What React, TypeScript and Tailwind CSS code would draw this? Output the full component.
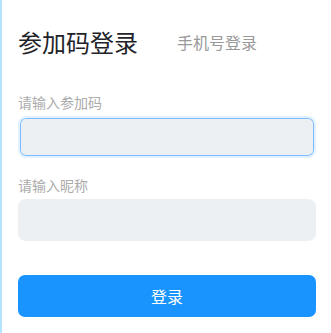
export default function App() {
  return (
    <div
      className="h-[333px] w-[331px] border-l-2 border-[#b3e3ff] bg-white"
      style={{ fontFamily: '"Noto Sans CJK SC", "Noto Sans", sans-serif' }}
    >
      <div className="px-[16px] pt-[28px]">
        {/* 标题 */}
        <div className="flex items-center">
          <span className="text-[24px] leading-[28px] text-[#1f2329]">参加码登录</span>
          <span className="ml-[39px] text-[16px] leading-[28px] text-[#9a9a9a]">手机号登录</span>
        </div>

        {/* 参加码 */}
        <p className="mt-[36px] text-[14px] leading-[20px] text-[#ababab]">请输入参加码</p>
        <input
          className="mt-[4px] block h-[42px] w-[298px] rounded-[8px] border-2 border-[#e2f1ff] bg-[#edf0f2] px-3 shadow-[inset_0_0_0_1px_#7dbcff] outline-none"
        />

        {/* 昵称 */}
        <p className="mt-[17px] text-[14px] leading-[20px] text-[#ababab]">请输入昵称</p>
        <input className="mt-[4px] block h-[42px] w-[298px] rounded-[8px] bg-[#edf0f2] px-3 outline-none" />

        <button
          type="button"
          className="mt-[34px] flex h-[42px] w-[298px] items-center justify-center rounded-[7px] bg-[#1994ff] text-[16px] text-white"
        >
          登录
        </button>
      </div>
    </div>
  )
}
